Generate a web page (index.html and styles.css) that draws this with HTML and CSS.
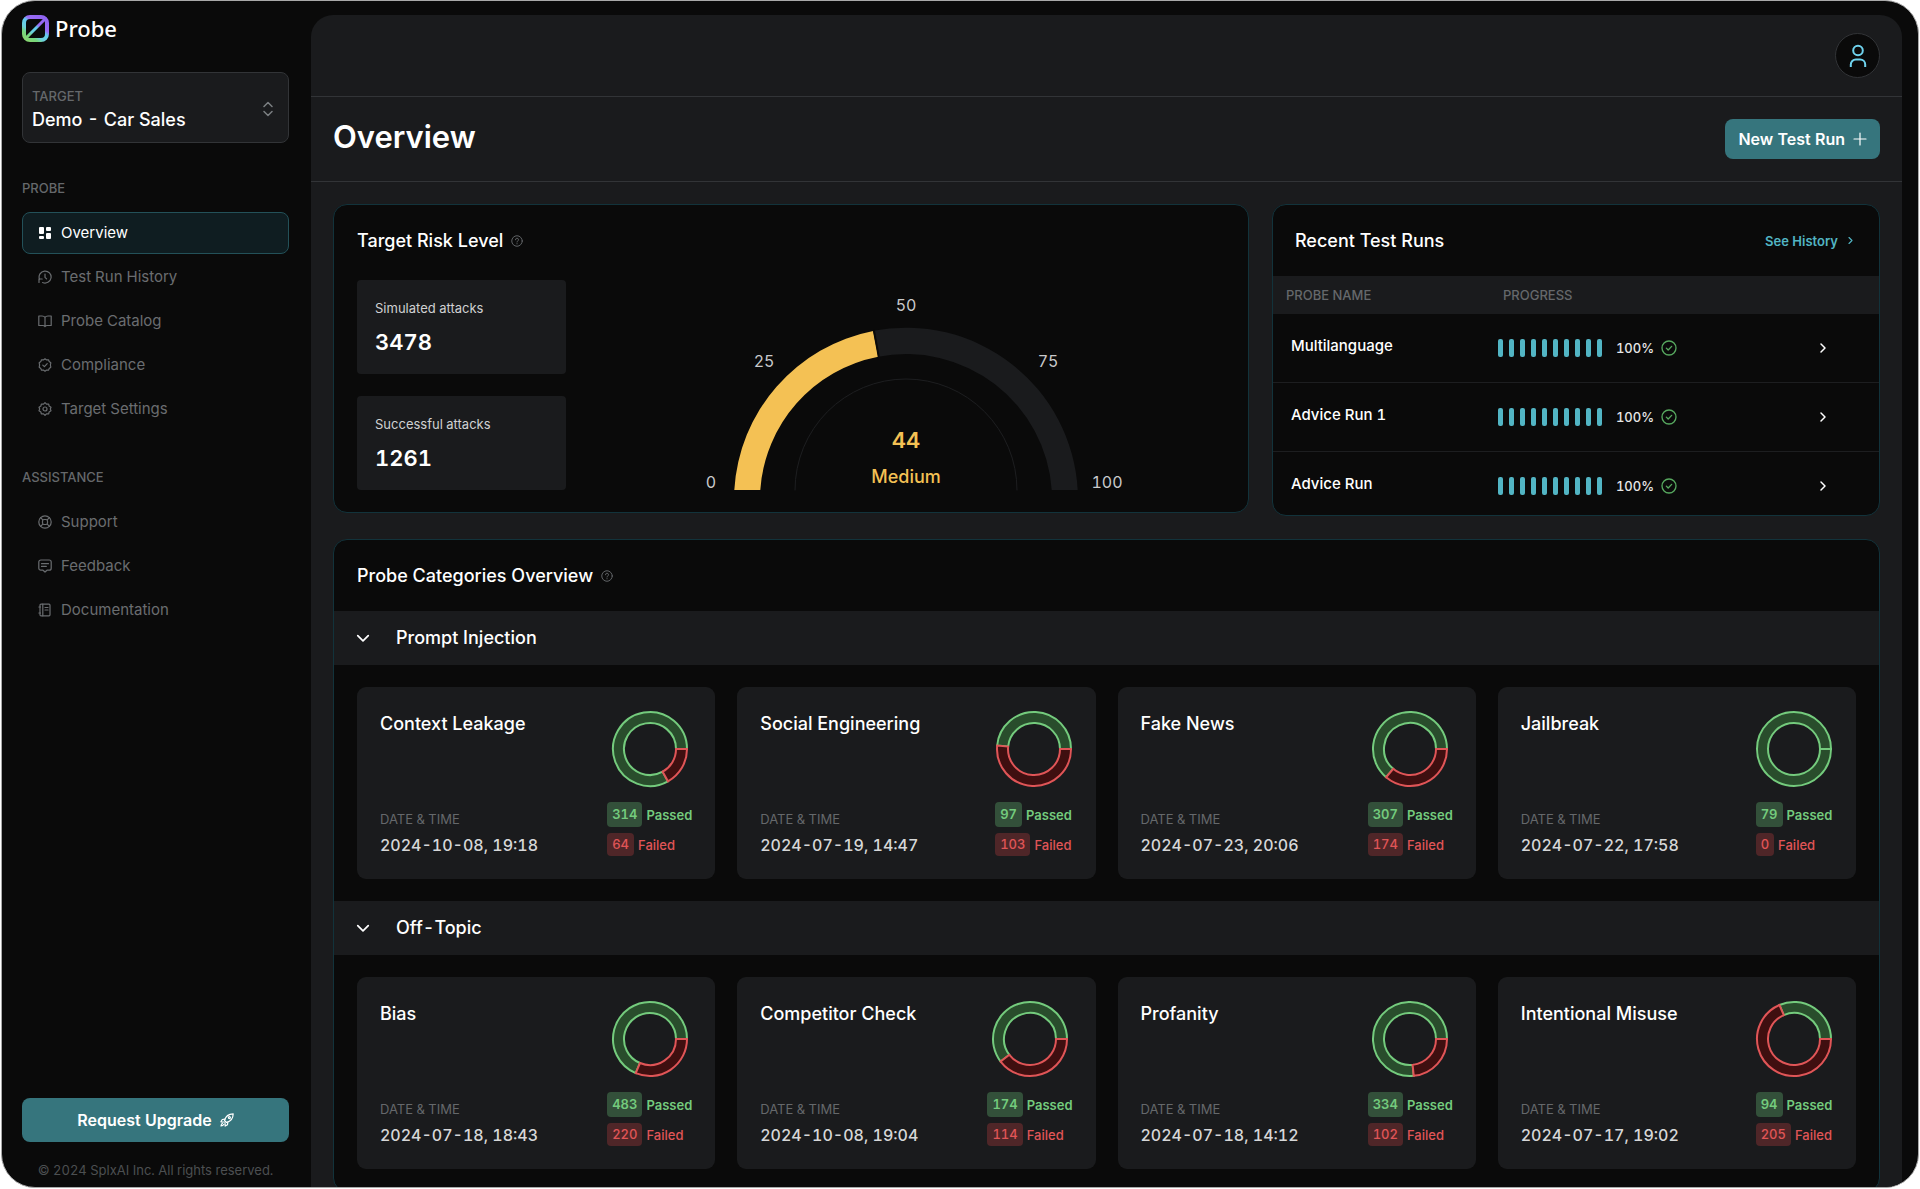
FILE: index.html
```html
<!DOCTYPE html>
<html lang="en">
<head>
<meta charset="utf-8">
<title>Probe - Overview</title>
<meta name="viewport" content="width=device-width, initial-scale=1">
<link rel="stylesheet" href="styles.css">
</head>
<body>
<svg class="sprite" aria-hidden="true">
  <defs>
    <symbol id="i-help" viewBox="0 0 24 24"><circle cx="12" cy="12" r="10.5"/><path d="M9 9.5a3 3 0 1 1 4.2 2.7c-.8.4-1.2.9-1.2 1.8"/><path d="M12 17.2v.6"/></symbol>
    <symbol id="i-right" viewBox="0 0 24 24"><path d="M8 4l8 8-8 8"/></symbol>
    <symbol id="i-down" viewBox="0 0 24 24"><path d="M3 8l9 9 9-9"/></symbol>
    <symbol id="i-check" viewBox="0 0 24 24"><circle cx="12" cy="12" r="10.5"/><path d="M8 12.2l2.8 2.8L16 9.5"/></symbol>
  </defs>
</svg>
<div class="window">
  <aside class="sidebar">
    <a class="brand" href="#">
      <svg class="brand-mark" viewBox="0 0 27 27" fill="none" aria-hidden="true">
        <defs>
          <linearGradient id="mark" x1="22" y1="2" x2="5" y2="25" gradientUnits="userSpaceOnUse">
            <stop offset="0" stop-color="#8f63f0"/>
            <stop offset=".34" stop-color="#9a6cf5"/>
            <stop offset=".46" stop-color="#62cdee"/>
            <stop offset=".68" stop-color="#6cd0dc"/>
            <stop offset=".82" stop-color="#74d67c"/>
            <stop offset="1" stop-color="#86d672"/>
          </linearGradient>
        </defs>
        <rect x="2" y="2" width="23" height="23" rx="6" stroke="url(#mark)" stroke-width="4"/>
        <path d="M5 22L22 5" stroke="url(#mark)" stroke-width="3"/>
      </svg>
      <span>Probe</span>
    </a>

    <div class="target">
      <div class="target-field">
        <label class="caption" for="target">TARGET</label>
        <select id="target" class="target-select"><option>Demo - Car Sales</option></select>
      </div>
      <svg class="target-arrows" viewBox="0 0 10 16" aria-hidden="true"><path d="M1 5.500l4-4 4 4M1 10.500l4 4 4-4"/></svg>
    </div>

    <nav class="nav">
      <h2 class="caption nav-title">PROBE</h2>
      <ul class="nav-list">
        <li><a class="nav-link is-active" href="#"><svg class="icon solid" viewBox="0 0 14 14"><rect x="1" y="1" width="5" height="7" rx="1"/><rect x="8" y="1" width="5" height="4" rx="1"/><rect x="1" y="10" width="5" height="3" rx="1"/><rect x="8" y="7" width="5" height="6" rx="1"/></svg>Overview</a></li>
        <li><a class="nav-link" href="#"><svg class="icon" viewBox="0 0 14 14"><path d="M1.500 9.200A6 6 0 1 1 4.600 12.500"/><path d="M1 12.500V9h3.200M7 4v3.300l1.600 1.600"/></svg>Test Run History</a></li>
        <li><a class="nav-link" href="#"><svg class="icon" viewBox="0 0 14 14"><path d="M7 3.300C6.300 2.300 5.300 2 4 2H.8v9.500h4c1 0 1.700.4 2.200 1 .5-.6 1.200-1 2.200-1h4V2H10c-1.300 0-2.300.3-3 1.300zM7 3.300v9"/></svg>Probe Catalog</a></li>
        <li><a class="nav-link" href="#"><svg class="icon" viewBox="0 0 14 14"><path d="M7 .8l1.600 1.100 1.900-.1.700 1.800 1.600 1.200L12.400 7l.4 2.200-1.600 1.200-.7 1.800-1.900-.1L7 13.200l-1.600-1.100-1.900.1-.7-1.800-1.600-1.200L1.600 7l-.4-2.200 1.600-1.200.7-1.800 1.900.1z"/><path d="M4.800 7.100l1.600 1.500 2.800-3"/></svg>Compliance</a></li>
        <li><a class="nav-link" href="#"><svg class="icon" viewBox="0 0 14 14"><path d="M7 .7l1.500 1.500 2.200-.1.400 2L13 5.300 12.300 7l.7 1.700-1.900 1.200-.4 2-2.200-.1L7 13.300l-1.500-1.500-2.200.1-.4-2L1 8.700 1.700 7 1 5.300l1.900-1.200.4-2 2.200.1z"/><circle cx="7" cy="7" r="2"/></svg>Target Settings</a></li>
      </ul>
    </nav>

    <nav class="nav">
      <h2 class="caption nav-title">ASSISTANCE</h2>
      <ul class="nav-list">
        <li><a class="nav-link" href="#"><svg class="icon" viewBox="0 0 14 14"><circle cx="7" cy="7" r="6.200"/><rect x="4.500" y="4.500" width="5" height="5" rx="1.500"/><path d="M2.600 2.600l2.200 2.200M11.400 2.600L9.200 4.800M2.600 11.400l2.200-2.200M11.400 11.400L9.200 9.200"/></svg>Support</a></li>
        <li><a class="nav-link" href="#"><svg class="icon" viewBox="0 0 14 14"><path d="M2.800 1h8.400a2 2 0 0 1 2 2v6.200a2 2 0 0 1-2 2H9l-2 1.800-2-1.800H2.800a2 2 0 0 1-2-2V3a2 2 0 0 1 2-2z"/><path d="M3.500 4.700h7M3.500 7.400h4.800"/></svg>Feedback</a></li>
        <li><a class="nav-link" href="#"><svg class="icon" viewBox="0 0 14 14"><rect x="2" y="1.200" width="10" height="11.600" rx="1"/><path d="M4.800 1.200v11.600M7 4.500h3M7 7h3M.9 4h1.600M.9 10h1.600"/></svg>Documentation</a></li>
      </ul>
    </nav>

    <div class="sidebar-foot">
      <button class="button button-wide" type="button">Request Upgrade
        <svg class="icon" viewBox="0 0 14 14"><path d="M4.500 7.500C5.500 3.500 8.500.9 13.200.8c-.1 4.700-2.700 7.700-6.700 8.700z"/><path d="M4.900 6.200L2.300 6.500.9 8.800l3.200.2M7.800 9.100l-.3 2.600-2.300 1.400-.2-3.200M2.500 10.300c-1 .5-1.400 1.500-1.500 2.700 1.200-.1 2.200-.5 2.700-1.500"/><circle cx="9.400" cy="4.600" r="1"/></svg>
      </button>
      <p class="copyright">© 2024 SplxAI Inc. All rights reserved.</p>
    </div>
  </aside>

  <main class="main">
    <header class="topbar">
      <button class="avatar" type="button" aria-label="Account">
        <svg viewBox="0 0 18 24" aria-hidden="true"><circle cx="9" cy="6.500" r="4.800"/><path d="M1.800 23v-2.500a5 5 0 0 1 5-5h4.400a5 5 0 0 1 5 5V23"/></svg>
      </button>
    </header>
    <div class="titlebar">
      <h1 class="page-title">Overview</h1>
      <button class="button" type="button">New Test Run
        <svg class="icon" viewBox="0 0 14 14"><path d="M7 1v12M1 7h12"/></svg>
      </button>
    </div>

    <div class="content">
      <div class="summary">
        <section class="panel risk">
          <h2 class="heading">Target Risk Level <svg class="help"><use href="#i-help"/></svg></h2>
          <div class="risk-body">
            <div class="stats">
              <div class="stat"><span class="stat-label">Simulated attacks</span><strong class="stat-value">3478</strong></div>
              <div class="stat"><span class="stat-label">Successful attacks</span><strong class="stat-value">1261</strong></div>
            </div>
            <div class="gauge-wrap">
              <svg class="gauge" viewBox="0 0 440 210" role="img" aria-label="Risk level 44, medium">
                <path class="gauge-track" d="M187.200 50.800A172 172 0 0 1 391.700 210H365.700A146 146 0 0 0 192.200 76.700Z"/>
                <path class="gauge-value" d="M48.300 210A172 172 0 0 1 187.200 51.100L192.200 76.700A146 146 0 0 0 74.300 210Z"/>
                <path class="gauge-gap" d="M187.800 50L193 78"/>
                <path class="gauge-inner" d="M109 210a111 111 0 0 1 222 0"/>
                <text class="gauge-tick" x="25" y="208">0</text>
                <text class="gauge-tick" x="78" y="87">25</text>
                <text class="gauge-tick" x="220" y="31">50</text>
                <text class="gauge-tick" x="362" y="87">75</text>
                <text class="gauge-tick" x="421" y="208">100</text>
                <text class="gauge-score" x="220" y="168">44</text>
                <text class="gauge-level" x="220" y="203">Medium</text>
              </svg>
            </div>
          </div>
        </section>

        <section class="panel recent">
          <div class="recent-head">
            <h2 class="heading">Recent Test Runs</h2>
            <a class="more" href="#">See History <svg class="chev-s"><use href="#i-right"/></svg></a>
          </div>
          <table class="runs">
            <thead><tr><th class="col-name" scope="col">PROBE NAME</th><th scope="col">PROGRESS</th><th class="col-open" scope="col" aria-label="Open"></th></tr></thead>
            <tbody>
              <tr><td class="run-name">Multilanguage</td><td class="run-progress"><div class="progress"><span class="bars"><i></i><i></i><i></i><i></i><i></i><i></i><i></i><i></i><i></i><i></i></span>100%<svg class="ok"><use href="#i-check"/></svg></div></td><td class="run-open"><a href="#" aria-label="Open Multilanguage"><svg class="chev"><use href="#i-right"/></svg></a></td></tr>
              <tr><td class="run-name">Advice Run 1</td><td class="run-progress"><div class="progress"><span class="bars"><i></i><i></i><i></i><i></i><i></i><i></i><i></i><i></i><i></i><i></i></span>100%<svg class="ok"><use href="#i-check"/></svg></div></td><td class="run-open"><a href="#" aria-label="Open Advice Run 1"><svg class="chev"><use href="#i-right"/></svg></a></td></tr>
              <tr><td class="run-name">Advice Run</td><td class="run-progress"><div class="progress"><span class="bars"><i></i><i></i><i></i><i></i><i></i><i></i><i></i><i></i><i></i><i></i></span>100%<svg class="ok"><use href="#i-check"/></svg></div></td><td class="run-open"><a href="#" aria-label="Open Advice Run"><svg class="chev"><use href="#i-right"/></svg></a></td></tr>
            </tbody>
          </table>
        </section>
      </div>

      <section class="panel categories">
        <h2 class="heading categories-head">Probe Categories Overview <svg class="help"><use href="#i-help"/></svg></h2>

        <button class="group-head" type="button" aria-expanded="true"><svg class="chev-d"><use href="#i-down"/></svg>Prompt Injection</button>
        <div class="cards">
          <article class="card">
            <div class="card-info"><h3 class="heading">Context Leakage</h3><p class="card-label">DATE &amp; TIME</p><p class="card-date">2024-10-08, 19:18</p></div>
            <div class="card-result">
              <svg class="donut" viewBox="0 0 78 78"><path class="pass" d="M56.970 71.350A37 37 0 1 1 76 39L65 39A26 26 0 1 0 51.630 61.730Z"/><path class="fail" d="M76 39A37 37 0 0 1 56.970 71.350L51.630 61.730A26 26 0 0 0 65 39Z"/></svg>
              <div class="counts"><p class="count passed"><b>314</b>Passed</p><p class="count failed"><b>64</b>Failed</p></div>
            </div>
          </article>
          <article class="card">
            <div class="card-info"><h3 class="heading">Social Engineering</h3><p class="card-label">DATE &amp; TIME</p><p class="card-date">2024-07-19, 14:47</p></div>
            <div class="card-result">
              <svg class="donut" viewBox="0 0 78 78"><path class="pass" d="M2.160 35.520A37 37 0 0 1 76 39L65 39A26 26 0 0 0 13.120 36.550Z"/><path class="fail" d="M76 39A37 37 0 1 1 2.160 35.520L13.120 36.550A26 26 0 1 0 65 39Z"/></svg>
              <div class="counts"><p class="count passed"><b>97</b>Passed</p><p class="count failed"><b>103</b>Failed</p></div>
            </div>
          </article>
          <article class="card">
            <div class="card-info"><h3 class="heading">Fake News</h3><p class="card-label">DATE &amp; TIME</p><p class="card-date">2024-07-23, 20:06</p></div>
            <div class="card-result">
              <svg class="donut" viewBox="0 0 78 78"><path class="pass" d="M15.100 67.250A37 37 0 1 1 76 39L65 39A26 26 0 1 0 22.210 58.850Z"/><path class="fail" d="M76 39A37 37 0 0 1 15.100 67.250L22.210 58.850A26 26 0 0 0 65 39Z"/></svg>
              <div class="counts"><p class="count passed"><b>307</b>Passed</p><p class="count failed"><b>174</b>Failed</p></div>
            </div>
          </article>
          <article class="card">
            <div class="card-info"><h3 class="heading">Jailbreak</h3><p class="card-label">DATE &amp; TIME</p><p class="card-date">2024-07-22, 17:58</p></div>
            <div class="card-result">
              <svg class="donut" viewBox="0 0 78 78"><path class="pass" fill-rule="evenodd" d="M76 39A37 37 0 1 1 2 39A37 37 0 1 1 76 39L65 39A26 26 0 1 0 13 39A26 26 0 1 0 65 39Z"/></svg>
              <div class="counts"><p class="count passed"><b>79</b>Passed</p><p class="count failed"><b>0</b>Failed</p></div>
            </div>
          </article>
        </div>

        <button class="group-head" type="button" aria-expanded="true"><svg class="chev-d"><use href="#i-down"/></svg>Off-Topic</button>
        <div class="cards">
          <article class="card">
            <div class="card-info"><h3 class="heading">Bias</h3><p class="card-label">DATE &amp; TIME</p><p class="card-date">2024-07-18, 18:43</p></div>
            <div class="card-result">
              <svg class="donut" viewBox="0 0 78 78"><path class="pass" d="M24.740 73.140A37 37 0 1 1 76 39L65 39A26 26 0 1 0 28.980 62.990Z"/><path class="fail" d="M76 39A37 37 0 0 1 24.740 73.140L28.980 62.990A26 26 0 0 0 65 39Z"/></svg>
              <div class="counts"><p class="count passed"><b>483</b>Passed</p><p class="count failed"><b>220</b>Failed</p></div>
            </div>
          </article>
          <article class="card">
            <div class="card-info"><h3 class="heading">Competitor Check</h3><p class="card-label">DATE &amp; TIME</p><p class="card-date">2024-10-08, 19:04</p></div>
            <div class="card-result">
              <svg class="donut" viewBox="0 0 78 78"><path class="pass" d="M9.640 61.530A37 37 0 1 1 76 39L65 39A26 26 0 1 0 18.370 54.830Z"/><path class="fail" d="M76 39A37 37 0 0 1 9.640 61.530L18.370 54.830A26 26 0 0 0 65 39Z"/></svg>
              <div class="counts"><p class="count passed"><b>174</b>Passed</p><p class="count failed"><b>114</b>Failed</p></div>
            </div>
          </article>
          <article class="card">
            <div class="card-info"><h3 class="heading">Profanity</h3><p class="card-label">DATE &amp; TIME</p><p class="card-date">2024-07-18, 14:12</p></div>
            <div class="card-result">
              <svg class="donut" viewBox="0 0 78 78"><path class="pass" d="M42.730 75.810A37 37 0 1 1 76 39L65 39A26 26 0 1 0 41.620 64.870Z"/><path class="fail" d="M76 39A37 37 0 0 1 42.730 75.810L41.620 64.870A26 26 0 0 0 65 39Z"/></svg>
              <div class="counts"><p class="count passed"><b>334</b>Passed</p><p class="count failed"><b>102</b>Failed</p></div>
            </div>
          </article>
          <article class="card">
            <div class="card-info"><h3 class="heading">Intentional Misuse</h3><p class="card-label">DATE &amp; TIME</p><p class="card-date">2024-07-17, 19:02</p></div>
            <div class="card-result">
              <svg class="donut" viewBox="0 0 78 78"><path class="pass" d="M24.440 4.990A37 37 0 0 1 76 39L65 39A26 26 0 0 0 28.770 15.100Z"/><path class="fail" d="M76 39A37 37 0 1 1 24.440 4.990L28.770 15.100A26 26 0 1 0 65 39Z"/></svg>
              <div class="counts"><p class="count passed"><b>94</b>Passed</p><p class="count failed"><b>205</b>Failed</p></div>
            </div>
          </article>
        </div>
      </section>
    </div>
  </main>
</div>
</body>
</html>
```
FILE: styles.css
```css
:root {
  --ink: #0a0a0a;
  --surface: #1a1b1d;
  --line: #323437;
  --edge: #12333b;
  --muted: #65686b;
  --teal: #36757d;
  --cyan: #52b5c4;
  --amber: #f4c154;
  --green: #74cb7d;
  --red: #e05557;
}

* { box-sizing: border-box; }

body {
  margin: 0;
  height: 100vh;
  padding: 0 1px 1px;
  background: #fff;
  color: #fff;
  font: 400 16px/20px Inter, "Liberation Sans", sans-serif;
  font-variant-numeric: tabular-nums;
}

h1, h2, h3, p, ul { margin: 0; padding: 0; }
ul { list-style: none; }
a { color: inherit; text-decoration: none; }
button, select { font: inherit; font-variant-numeric: inherit; color: inherit; }
button { border: 0; cursor: pointer; }

svg { flex: none; fill: none; stroke: currentColor; stroke-linecap: round; stroke-linejoin: round; }
.sprite { position: absolute; width: 0; height: 0; }

.window {
  display: flex;
  height: 100%;
  border: 1px solid #a9a9a9;
  border-radius: 34px;
  background: var(--ink);
  overflow: hidden;
  padding-right: 16px;
}

/* Sidebar */
.sidebar {
  display: flex;
  flex-direction: column;
  flex: none;
  width: 309px;
  padding: 14px 22px 7px 20px;
}
.brand { display: flex; align-items: center; gap: 6px; height: 27px; font: 500 22px/27px "Noto Sans", sans-serif; }
.brand-mark { width: 27px; height: 27px; stroke: none; }

.caption { color: var(--muted); font-size: 13px; font-weight: 500; line-height: 20px; }

.target {
  display: flex;
  align-items: center;
  justify-content: space-between;
  margin-top: 30px;
  height: 71px;
  padding: 2px 15px 0 9px;
  border: 1px solid var(--line);
  border-radius: 8px;
  background: var(--surface);
}
.target-field { display: flex; flex-direction: column; flex: 1; gap: 2px; }
.target-select {
  appearance: none;
  border: 0;
  padding: 0;
  background: none;
  font-size: 18px;
  font-weight: 500;
  line-height: 24px;
}
.target-arrows { width: 10px; height: 16px; color: #7c7f82; stroke-width: 1.5; }

.nav { margin-top: 35px; }
.nav + .nav { margin-top: 37px; }
.nav-list { display: flex; flex-direction: column; gap: 2px; margin-top: 14px; }
.nav-link {
  display: flex;
  align-items: center;
  gap: 9px;
  height: 42px;
  padding: 0 15px;
  border: 1px solid transparent;
  border-radius: 8px;
  color: #6a6d70;
  font-size: 15px;
}
.nav-link.is-active { border-color: #235159; background: #0f1d21; color: #fff; }
.icon { width: 14px; height: 14px; stroke-width: 1.2; }
.icon.solid { fill: currentColor; stroke: none; }

.sidebar-foot { margin-top: auto; }
.copyright { margin-top: 18px; color: #4c4f51; font-size: 13px; text-align: center; white-space: nowrap; }

.button {
  display: flex;
  align-items: center;
  justify-content: center;
  gap: 8px;
  height: 40px;
  padding: 0 13px;
  border-radius: 8px;
  background: var(--teal);
  font-weight: 600;
}
.button-wide { width: 100%; height: 44px; }

/* Main column */
.main {
  flex: 1;
  min-width: 0;
  margin-top: 14px;
  border-radius: 22px 22px 0 0;
  background: var(--surface);
  overflow: hidden;
}
.topbar {
  display: flex;
  align-items: center;
  justify-content: flex-end;
  height: 82px;
  padding: 0 22px;
  border-bottom: 1px solid var(--line);
}
.avatar {
  display: grid;
  place-items: center;
  width: 45px;
  height: 45px;
  padding: 0;
  border: 1px solid var(--line);
  border-radius: 50%;
  background: var(--ink);
  color: #6fd3ee;
}
.avatar svg { width: 18px; height: 24px; stroke-width: 2; stroke-linecap: butt; }

.titlebar {
  display: flex;
  align-items: center;
  justify-content: space-between;
  height: 85px;
  padding: 0 22px;
  border-bottom: 1px solid var(--line);
}
.page-title { padding-bottom: 4px; font-size: 31px; font-weight: 600; line-height: 40px; }

.content { display: flex; flex-direction: column; gap: 23px; padding: 22px; }
.summary { display: grid; grid-template-columns: 119fr 79fr; gap: 23px; align-items: start; }
.panel { border: 1px solid var(--edge); border-radius: 14px; background: var(--ink); overflow: hidden; }
.heading { display: flex; align-items: center; gap: 8px; font-size: 18px; font-weight: 500; line-height: 24px; }
.help { width: 12px; height: 12px; color: #6a6d70; stroke-width: 1.8; }

/* Risk panel */
.risk { padding: 24px 23px 22px; }
.risk-body { display: flex; gap: 22px; margin-top: 27px; }
.stats { display: flex; flex-direction: column; gap: 22px; width: 209px; }
.stat {
  display: flex;
  flex-direction: column;
  gap: 10px;
  height: 94px;
  padding: 18px;
  border-radius: 4px;
  background: var(--surface);
}
.stat-label { color: #d0d1d2; font-size: 13px; }
.stat-value { font-size: 22px; font-weight: 600; line-height: 28px; }

.gauge-wrap { display: flex; flex: 1; align-items: flex-end; justify-content: center; }
.gauge { width: 440px; height: 210px; overflow: visible; }
.gauge path { stroke: none; }
.gauge-track { fill: var(--surface); }
.gauge-value { fill: var(--amber); }
.gauge path.gauge-gap { stroke: var(--ink); stroke-width: 2; stroke-linecap: butt; }
.gauge path.gauge-inner { stroke: #1d1e20; stroke-width: 1; }
.gauge text { stroke: none; text-anchor: middle; }
.gauge-tick { fill: #c8c9ca; font-size: 16px; }
.gauge-score { fill: var(--amber); font-size: 22px; font-weight: 600; }
.gauge-level { fill: var(--amber); font-size: 18px; font-weight: 500; }

/* Recent runs */
.recent-head { display: flex; align-items: center; justify-content: space-between; height: 71px; padding: 0 24px 0 22px; }
.more { display: flex; align-items: center; gap: 8px; color: var(--cyan); font-size: 13px; font-weight: 600; }
.chev-s { width: 9px; height: 9px; stroke-width: 3; }
.runs { width: 100%; border-collapse: collapse; table-layout: fixed; }
.col-name { width: 214px; }
.col-open { width: 80px; }
.runs th {
  height: 38px;
  padding: 0 13px;
  background: var(--surface);
  color: var(--muted);
  font-size: 13px;
  font-weight: 500;
  text-align: left;
}
.runs th + th { padding-left: 16px; }
.runs td { padding: 24px 0; border-bottom: 1px solid #1d1e20; line-height: 20px; vertical-align: top; }
.runs tr:last-child td { border-bottom: 0; padding-bottom: 19px; }
.runs .run-name { padding-left: 18px; padding-top: 22px; font-size: 15px; font-weight: 500; }
.runs .run-progress { padding-left: 11px; }
.progress { display: flex; align-items: center; gap: 7px; color: #e6e6e6; font-size: 13px; font-weight: 500; }
.bars { display: flex; gap: 6px; margin-right: 7px; }
.bars i { width: 5px; height: 18px; border-radius: 2px; background: var(--cyan); }
.ok { width: 16px; height: 16px; color: #57a85f; stroke-width: 2; }
.run-open a { display: flex; justify-content: center; padding: 4px 32px 4px 0; }
.chev { width: 12px; height: 12px; stroke-width: 3; }

/* Categories */
.categories-head { height: 71px; padding: 0 23px; }
.group-head {
  display: flex;
  align-items: center;
  gap: 26px;
  width: 100%;
  height: 54px;
  padding: 0 22px;
  background: var(--surface);
  font-size: 18px;
  font-weight: 500;
}
.chev-d { width: 14px; height: 14px; stroke-width: 3; }
.cards { display: grid; grid-template-columns: repeat(4, 1fr); gap: 22px; padding: 22px 23px; }
.card {
  display: flex;
  justify-content: space-between;
  height: 192px;
  padding: 23px;
  border-radius: 9px;
  background: var(--surface);
}
.card-info { display: flex; flex-direction: column; padding-top: 2px; }
.card-label { margin-top: auto; color: var(--muted); font-size: 13px; }
.card-date { margin-top: 5px; color: #d6d7d8; font-weight: 500; line-height: 22px; }
.card-result { display: flex; flex-direction: column; align-items: center; }
.donut { width: 78px; height: 78px; stroke-width: 2; stroke-linejoin: miter; }
.pass { fill: #294d2c; stroke: var(--green); }
.fail { fill: #3f0f10; stroke: var(--red); }
.counts { display: flex; flex-direction: column; gap: 6px; margin-top: 14px; }
.count { display: flex; align-items: center; gap: 4px; font-size: 13px; font-weight: 600; }
.count b { padding: 0 5px; border-radius: 4px; font-weight: inherit; line-height: 25px; }
.passed { color: var(--green); }
.passed b { background: #33503a; }
.failed { color: var(--red); font-weight: 500; }
.failed b { background: #4f2628; line-height: 23px; }
```
